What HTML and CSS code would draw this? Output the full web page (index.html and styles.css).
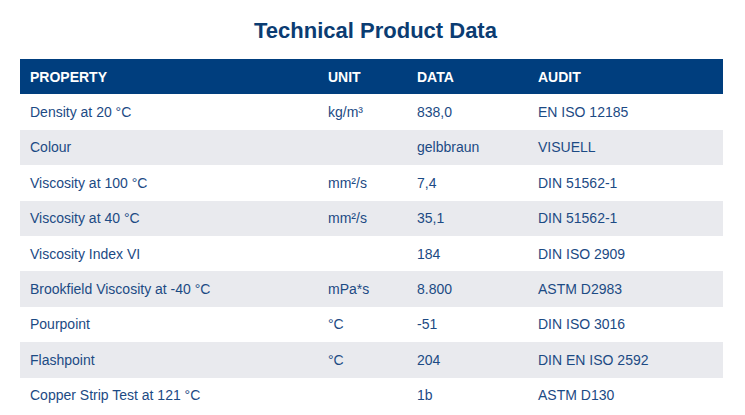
FILE: index.html
```html
<!DOCTYPE html>
<html>
<head lang="en">
    <meta charset="UTF-8">
    <title>Technical Product Data</title>
    <link rel="stylesheet" href="styles.css">
</head>
<body>
<div class="wrap">
    <h1 class="title">Technical Product Data</h1>

    <table class="data">
        <thead>
        <tr>
            <th class="c-prop">PROPERTY</th>
            <th class="c-unit">UNIT</th>
            <th class="c-data">DATA</th>
            <th class="c-audit">AUDIT</th>
        </tr>
        </thead>
        <tbody>
        <tr>
            <td>Density at 20 °C</td>
            <td>kg/m³</td>
            <td>838,0</td>
            <td>EN ISO 12185</td>
        </tr>
        <tr>
            <td>Colour</td>
            <td></td>
            <td>gelbbraun</td>
            <td>VISUELL</td>
        </tr>
        <tr>
            <td>Viscosity at 100 °C</td>
            <td>mm²/s</td>
            <td>7,4</td>
            <td>DIN 51562-1</td>
        </tr>
        <tr>
            <td>Viscosity at 40 °C</td>
            <td>mm²/s</td>
            <td>35,1</td>
            <td>DIN 51562-1</td>
        </tr>
        <tr>
            <td>Viscosity Index VI</td>
            <td></td>
            <td>184</td>
            <td>DIN ISO 2909</td>
        </tr>
        <tr>
            <td>Brookfield Viscosity at -40 °C</td>
            <td>mPa*s</td>
            <td>8.800</td>
            <td>ASTM D2983</td>
        </tr>
        <tr>
            <td>Pourpoint</td>
            <td>°C</td>
            <td>-51</td>
            <td>DIN ISO 3016</td>
        </tr>
        <tr>
            <td>Flashpoint</td>
            <td>°C</td>
            <td>204</td>
            <td>DIN EN ISO 2592</td>
        </tr>
        <tr>
            <td>Copper Strip Test at 121 °C</td>
            <td></td>
            <td>1b</td>
            <td>ASTM D130</td>
        </tr>
        </tbody>
    </table>
</div>
</body>
</html>
```

FILE: styles.css
```css
* {
    padding: 0;
    margin: 0;
}

body {
    background-color: #fff;
    font-family: "Liberation Sans", Arial, sans-serif;
    color: #1c4a84;
}

.wrap {
    padding: 17px 22px 0 20px;
}

.title {
    font-size: 22px;
    font-weight: bold;
    color: #0b3c72;
    text-align: center;
    line-height: 28px;
    height: 42px;
    padding-left: 8px;
}

.data {
    width: 703px;
    border-collapse: collapse;
    font-size: 14px;
}

.data th,
.data td {
    height: 35.4px;
    padding: 0 10px;
    text-align: left;
    vertical-align: middle;
    white-space: nowrap;
}

.data th {
    background-color: #003e7e;
    color: #fff;
    font-weight: bold;
}

.data tbody tr:nth-child(even) td {
    background-color: #e9eaee;
}

.c-prop {
    width: 278px;
}

.c-unit {
    width: 69px;
}

.c-data {
    width: 101px;
}
```
